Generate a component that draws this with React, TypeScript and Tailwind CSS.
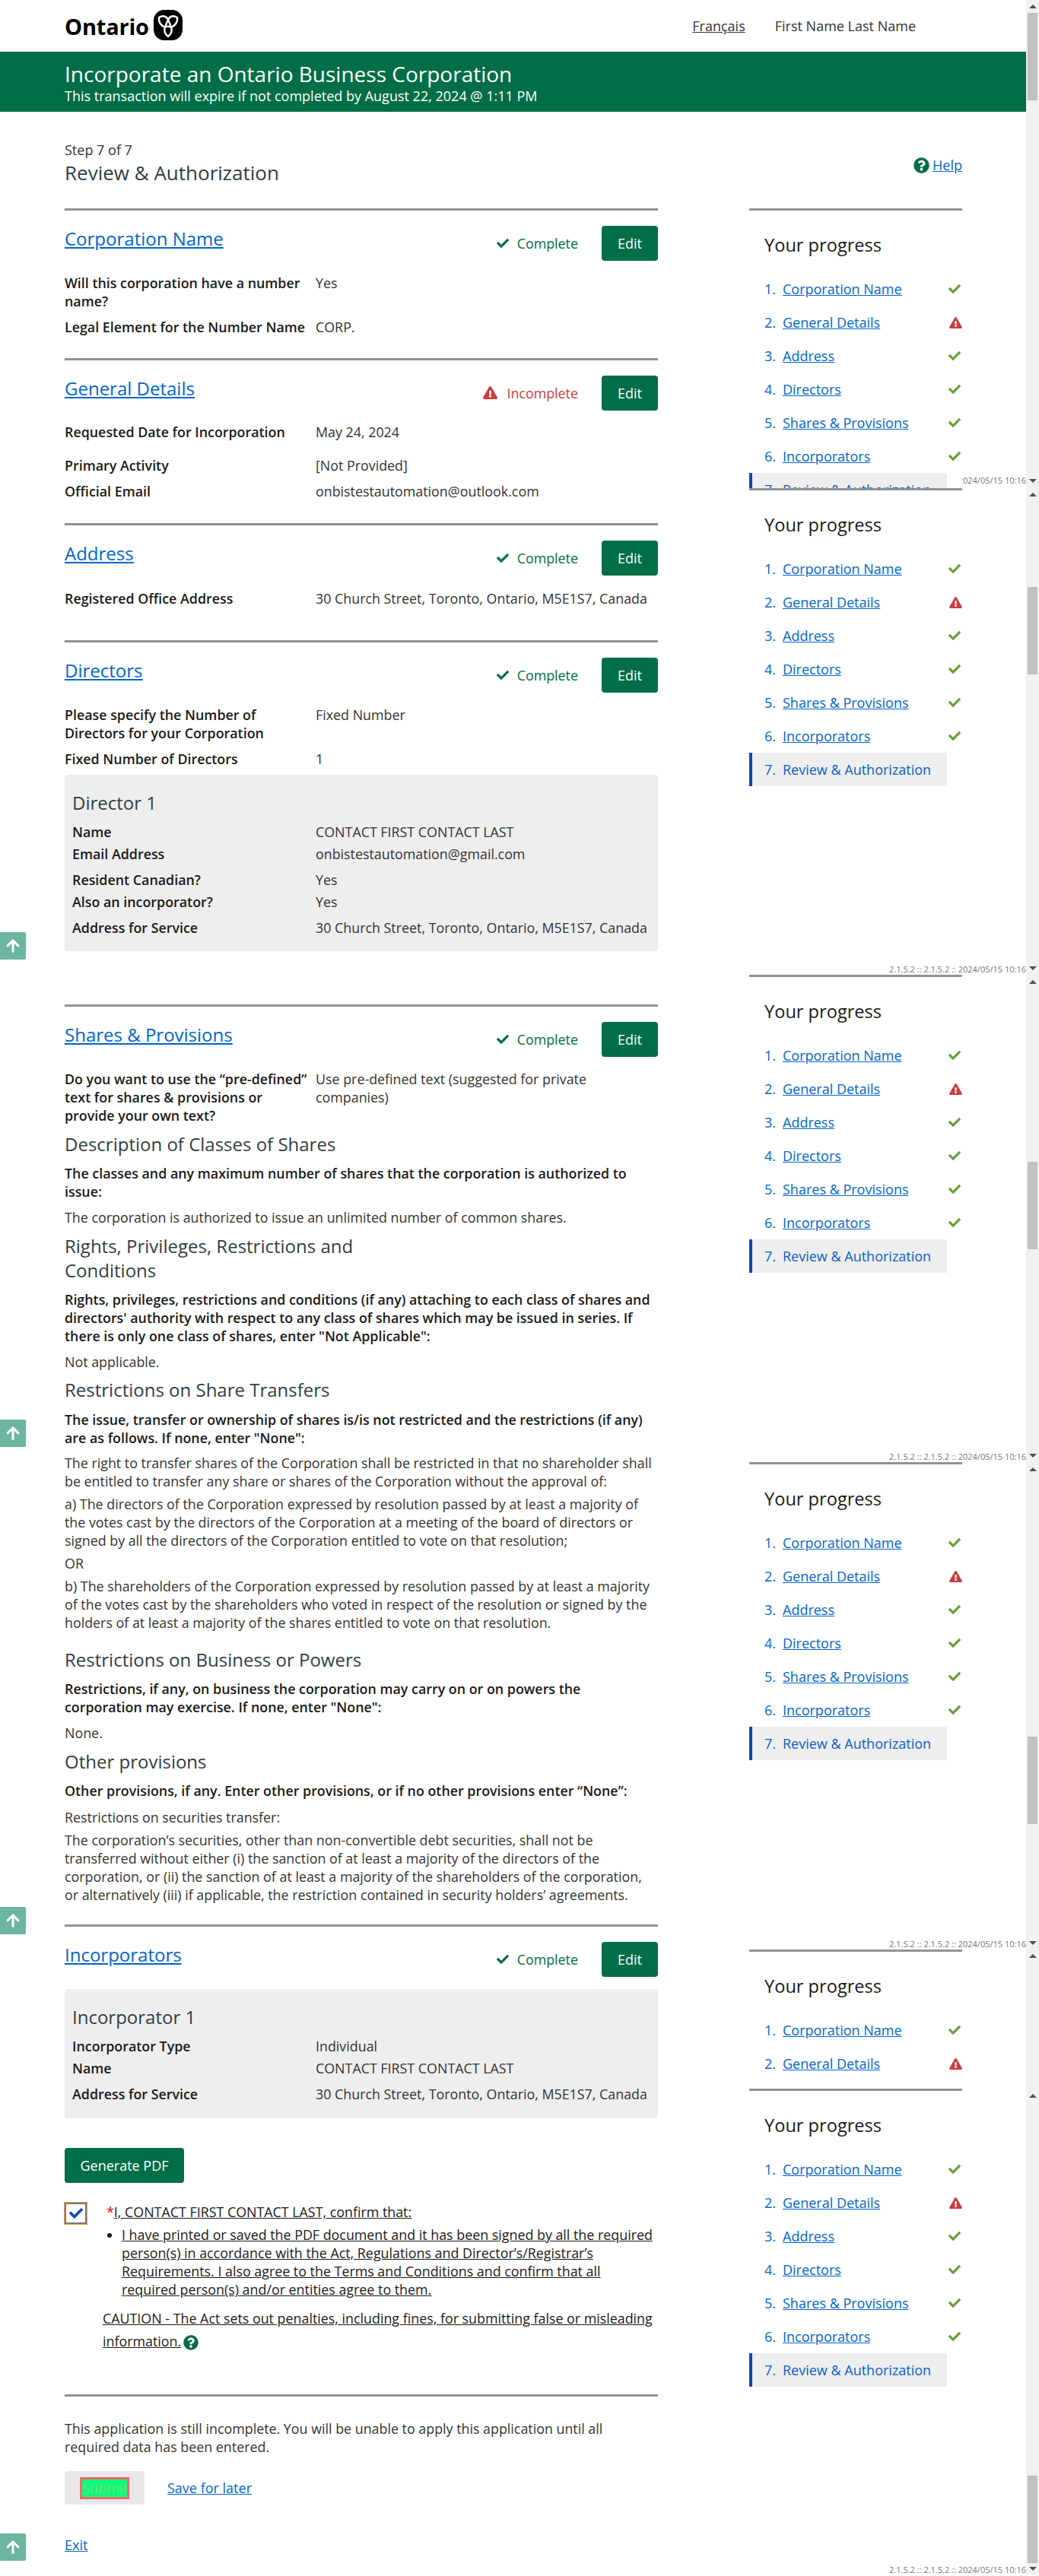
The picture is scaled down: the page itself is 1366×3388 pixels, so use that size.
import { FaArrowUp, FaCheck, FaExclamationTriangle, FaQuestionCircle } from 'react-icons/fa';

const progressItems = [
  { n: 1, label: 'Corporation Name', done: true },
  { n: 2, label: 'General Details', done: false },
  { n: 3, label: 'Address', done: true },
  { n: 4, label: 'Directors', done: true },
  { n: 5, label: 'Shares & Provisions', done: true },
  { n: 6, label: 'Incorporators', done: true },
];

const ADDRESS = '30 Church Street, Toronto, Ontario, M5E1S7, Canada';
const STAMP = '2.1.5.2 :: 2.1.5.2 :: 2024/05/15 10:16';

const OntarioLogo = () => (
  <div className="flex items-center h-[68px] pt-[1px]">
    <span className="text-[29px] leading-none font-bold text-black mr-[6px] tracking-[-0.2px]">Ontario</span>
    <svg width="38" height="40" viewBox="0 0 38 40" className="mb-[3px]">
      <rect width="38" height="40" rx="14" fill="#000" />
      <path
        d="M7 10 C12 7 17 8 19 13 C21 8 26 7 31 10 C32 16 28 21 23 23 C25 27 23 32 19 35 C15 32 13 27 15 23 C10 21 6 16 7 10 Z M19 13 C17 17 16 20 15 23 M19 13 C21 17 22 20 23 23 M15 23 C18 21 20 21 23 23"
        fill="none"
        stroke="#fff"
        strokeWidth="2.4"
      />
    </svg>
  </div>
);

const EditButton = () => (
  <button className="w-[74px] h-[46px] rounded-[4px] bg-[#026e47] text-white text-[18px]">Edit</button>
);

const SectionHead = ({ title, complete = true }: { title: string; complete?: boolean }) => (
  <div className="flex items-start justify-between pt-[20px]">
    <a className="text-[24px] leading-[34px] text-[#0066cc] underline">{title}</a>
    <div className="flex items-center h-[46px]">
      {complete ? (
        <span className="flex items-center text-[#026e47] text-[17.85px]">
          <FaCheck className="w-[16px] h-[16px] mr-[11px]" />
          Complete
        </span>
      ) : (
        <span className="flex items-center text-[#cd3c3c] text-[17.85px]">
          <FaExclamationTriangle className="w-[19px] h-[17px] mr-[12px]" />
          Incomplete
        </span>
      )}
      <div className="ml-[31px]">
        <EditButton />
      </div>
    </div>
  </div>
);

const Row = ({ label, value, className = '', labelWidth = 'w-[330px]' }: { label: string; value: string; className?: string; labelWidth?: string }) => (
  <div className={`flex text-[17.85px] leading-[24px] ${className}`}>
    <div className={`${labelWidth} shrink-0 pr-[10px] font-semibold text-[#1a1a1a]`}>{label}</div>
    <div className="text-[#333333]">{value}</div>
  </div>
);

const Hr = ({ className = '' }: { className?: string }) => <div className={`h-[3px] bg-[#929292] ${className}`} />;

const SubHead = ({ children, className = '' }: { children: React.ReactNode; className?: string }) => (
  <h4 className={`text-[24px] leading-[32px] text-[#2f3e46] ${className}`}>{children}</h4>
);

const Label = ({ children, className = 'mt-[10px]' }: { children: React.ReactNode; className?: string }) => (
  <p className={`text-[17.85px] leading-[24px] font-semibold text-[#1a1a1a] ${className}`}>{children}</p>
);

const Body = ({ children, className = 'mt-[10px]' }: { children: React.ReactNode; className?: string }) => (
  <p className={`text-[17.85px] leading-[24px] text-[#333333] ${className}`}>{children}</p>
);

const ProgressPanel = ({ className = '', active = true }: { className?: string; active?: boolean }) => (
  <div className={`overflow-hidden ${className}`}>
    <Hr />
    <h3 className="mt-[29px] pl-[20px] text-[23.6px] leading-[32px] text-[#1a1a1a]">Your progress</h3>
    <ol className="mt-[20px]">
      {progressItems.map((item) => (
        <li key={item.n} className="flex items-center h-[44px] pl-[20px] text-[18px]">
          <span className="w-[24px] text-[#0066cc]">{item.n}.</span>
          <a className="text-[#0066cc] underline flex-1">{item.label}</a>
          {item.done ? (
            <FaCheck className="w-[16px] h-[16px] text-[#689f38] mr-[2px]" />
          ) : (
            <FaExclamationTriangle className="w-[17px] h-[15px] text-[#cd3c3c]" />
          )}
        </li>
      ))}
      {active && (
        <li className="flex items-center h-[44px] w-[260px] pl-[16px] border-l-[4px] border-[#0f47a9] bg-[#eeeeee] text-[18px] text-[#0b5fcc]">
          <span className="w-[24px]">7.</span>
          Review &amp; Authorization
        </li>
      )}
    </ol>
  </div>
);

const UpArrow = ({ className }: { className: string }) => (
  <svg width="10" height="5" viewBox="0 0 10 5" className={`block mx-auto ${className}`}>
    <path d="M0 5 L5 0 L10 5 Z" fill="#505050" />
  </svg>
);

const DownArrow = ({ className }: { className: string }) => (
  <svg width="10" height="5" viewBox="0 0 10 5" className={`block mx-auto ${className}`}>
    <path d="M0 0 L10 0 L5 5 Z" fill="#505050" />
  </svg>
);

const Thumb = ({ className }: { className: string }) => (
  <div className={`mx-auto w-[13px] h-[115px] bg-[#c1c1c1] ${className}`} />
);

const BackToTop = ({ className }: { className: string }) => (
  <div className={`absolute left-0 w-[34px] h-[36px] rounded-r-[2px] bg-[#6cb5a0] flex items-center justify-center ${className}`}>
    <FaArrowUp className="w-[20px] h-[20px] text-white" />
  </div>
);

const Stamp = ({ className }: { className: string }) => (
  <div className={`absolute right-[17px] text-[11px] leading-[16px] text-[#767676] whitespace-nowrap ${className}`}>{STAMP}</div>
);

export default function App() {
  return (
    <div className="relative flex w-[1366px] bg-white" style={{ fontFamily: '"Open Sans", sans-serif' }}>
      <div className="w-[1349px]">
        <header className="flex items-center justify-between h-[68px] pl-[85px]">
          <OntarioLogo />
          <div className="flex items-center text-[18px] text-[#333333] pr-[145px]">
            <a className="underline mr-[39px]">Français</a>
            <span>First Name Last Name</span>
          </div>
        </header>
        <div className="h-[79px] bg-[#026e47] pl-[85px] pt-[13px] text-white">
          <h1 className="text-[28px] leading-[32px]">Incorporate an Ontario Business Corporation</h1>
          <p className="text-[18px] leading-[24px] mt-[1px]">This transaction will expire if not completed by August 22, 2024 @ 1:11 PM</p>
        </div>

        <div className="flex pl-[85px]">
          <main className="w-[780px]">
            <p className="mt-[38px] text-[18px] leading-[24px] text-[#333333]">Step 7 of 7</p>
            <h2 className="text-[26px] leading-[36px] text-[#2f3e46]">Review &amp; Authorization</h2>

            <Hr className="mt-[29px]" />
            <SectionHead title="Corporation Name" />
            <Row className="mt-[17px]" label="Will this corporation have a number name?" value="Yes" />
            <Row className="mt-[10px]" label="Legal Element for the Number Name" value="CORP." />

            <Hr className="mt-[29px]" />
            <SectionHead title="General Details" complete={false} />
            <Row className="mt-[16px]" label="Requested Date for Incorporation" value="May 24, 2024" />
            <Row className="mt-[20px]" label="Primary Activity" value="[Not Provided]" />
            <Row className="mt-[10px]" label="Official Email" value="onbistestautomation@outlook.com" />

            <Hr className="mt-[30px]" />
            <SectionHead title="Address" />
            <Row className="mt-[18px]" label="Registered Office Address" value={ADDRESS} />

            <Hr className="mt-[43px]" />
            <SectionHead title="Directors" />
            <Row className="mt-[17px]" label="Please specify the Number of Directors for your Corporation" value="Fixed Number" />
            <Row className="mt-[10px]" label="Fixed Number of Directors" value="1" />
            <div className="mt-[9px] bg-[#eeeeee] rounded-[4px] pl-[10px] pt-[21px] pb-[19px]">
              <SubHead>Director 1</SubHead>
              <Row className="mt-[10px]" labelWidth="w-[320px]" label="Name" value="CONTACT FIRST CONTACT LAST" />
              <Row className="mt-[5px]" labelWidth="w-[320px]" label="Email Address" value="onbistestautomation@gmail.com" />
              <Row className="mt-[10px]" labelWidth="w-[320px]" label="Resident Canadian?" value="Yes" />
              <Row className="mt-[5px]" labelWidth="w-[320px]" label="Also an incorporator?" value="Yes" />
              <Row className="mt-[10px]" labelWidth="w-[320px]" label="Address for Service" value={ADDRESS} />
            </div>

            <Hr className="mt-[70px]" />
            <SectionHead title="Shares & Provisions" />
            <Row className="mt-[17px]" label="Do you want to use the “pre-defined” text for shares & provisions or provide your own text?" value="Use pre-defined text (suggested for private companies)" />
            <SubHead className="mt-[10px]">Description of Classes of Shares</SubHead>
            <Label>The classes and any maximum number of shares that the corporation is authorized to issue:</Label>
            <Body>The corporation is authorized to issue an unlimited number of common shares.</Body>
            <SubHead className="mt-[10px] max-w-[450px]">Rights, Privileges, Restrictions and Conditions</SubHead>
            <Label>Rights, privileges, restrictions and conditions (if any) attaching to each class of shares and directors' authority with respect to any class of shares which may be issued in series. If there is only one class of shares, enter "Not Applicable":</Label>
            <Body>Not applicable.</Body>
            <SubHead className="mt-[9px]">Restrictions on Share Transfers</SubHead>
            <Label className="mt-[11px]">The issue, transfer or ownership of shares is/is not restricted and the restrictions (if any) are as follows. If none, enter "None":</Label>
            <Body className="mt-[9px]">The right to transfer shares of the Corporation shall be restricted in that no shareholder shall be entitled to transfer any share or shares of the Corporation without the approval of:</Body>
            <Body className="mt-[6px]">a) The directors of the Corporation expressed by resolution passed by at least a majority of the votes cast by the directors of the Corporation at a meeting of the board of directors or signed by all the directors of the Corporation entitled to vote on that resolution;</Body>
            <Body className="mt-[6px]">OR</Body>
            <Body className="mt-[6px]">b) The shareholders of the Corporation expressed by resolution passed by at least a majority of the votes cast by the shareholders who voted in respect of the resolution or signed by the holders of at least a majority of the shares entitled to vote on that resolution.</Body>
            <SubHead className="mt-[21px]">Restrictions on Business or Powers</SubHead>
            <Label>Restrictions, if any, on business the corporation may carry on or on powers the corporation may exercise. If none, enter "None":</Label>
            <Body>None.</Body>
            <SubHead className="mt-[10px]">Other provisions</SubHead>
            <Label>Other provisions, if any. Enter other provisions, or if no other provisions enter “None”:</Label>
            <Body className="mt-[11px]">Restrictions on securities transfer:</Body>
            <Body className="mt-[6px]">The corporation’s securities, other than non-convertible debt securities, shall not be transferred without either (i) the sanction of at least a majority of the directors of the corporation, or (ii) the sanction of at least a majority of the shareholders of the corporation, or alternatively (iii) if applicable, the restriction contained in security holders’ agreements.</Body>

            <Hr className="mt-[27px]" />
            <SectionHead title="Incorporators" />
            <div className="mt-[16px] bg-[#eeeeee] rounded-[4px] pl-[10px] pt-[21px] pb-[20px]">
              <SubHead>Incorporator 1</SubHead>
              <Row className="mt-[10px]" labelWidth="w-[320px]" label="Incorporator Type" value="Individual" />
              <Row className="mt-[5px]" labelWidth="w-[320px]" label="Name" value="CONTACT FIRST CONTACT LAST" />
              <Row className="mt-[10px]" labelWidth="w-[320px]" label="Address for Service" value={ADDRESS} />
            </div>

            <button className="mt-[39px] block w-[157px] h-[46px] rounded-[4px] bg-[#026e47] text-white text-[18px]">Generate PDF</button>

            <div className="flex mt-[25px]">
              <div className="w-[31px] h-[30px] -ml-[1px] shrink-0 border border-[#e59c4b] bg-white">
                <div className="w-full h-full border-2 border-[#7a7a7a] flex items-center justify-center">
                  <FaCheck className="w-[18px] h-[18px] text-[#0f47a9]" />
                </div>
              </div>
              <div className="ml-[20px] text-[17.85px] leading-[24px] text-[#1a1a1a]">
                <div className="pl-[5px] mt-[1px]">
                  <span className="text-[#e60000]">*</span>
                  <span className="underline">I, CONTACT FIRST CONTACT LAST, confirm that:</span>
                </div>
                <ul className="mt-[6px] pl-[25px] list-disc">
                  <li className="underline">I have printed or saved the PDF document and it has been signed by all the required person(s) in accordance with the Act, Regulations and Director’s/Registrar’s Requirements. I also agree to the Terms and Conditions and confirm that all required person(s) and/or entities agree to them.</li>
                </ul>
                <div className="mt-[11px] leading-[30px]">
                  <span className="underline">CAUTION - The Act sets out penalties, including fines, for submitting false or misleading information.</span>
                  <FaQuestionCircle className="inline-block w-[20px] h-[20px] ml-[3px] text-[#026e47] align-[-5px]" />
                </div>
              </div>
            </div>

            <Hr className="mt-[55px]" />
            <Body className="mt-[30px]">This application is still incomplete. You will be unable to apply this application until all required data has been entered.</Body>
            <div className="flex items-center mt-[20px]">
              <div className="flex items-center justify-center w-[105px] h-[44px] rounded-[4px] bg-[#e8e8e8]">
                <button className="w-[65px] h-[29px] border-[3px] border-[#f9656a] bg-[#0bfb7c] text-[#6ee26e] text-[18px] leading-none overflow-hidden">Submit</button>
              </div>
              <a className="ml-[30px] text-[18px] text-[#0066cc] underline">Save for later</a>
            </div>
            <p className="mt-[41px] pb-[28px] text-[18px] leading-[24px]">
              <a className="text-[#0066cc] underline">Exit</a>
            </p>
          </main>

          <aside className="ml-[120px] w-[280px]">
            <div className="flex items-center justify-end mt-[58px] mb-[45px] h-[24px] text-[18px]">
              <FaQuestionCircle className="w-[21px] h-[21px] text-[#026e47] mr-[4px]" />
              <a className="text-[#0066cc] underline">Help</a>
            </div>
            <ProgressPanel className="h-[368px]" />
            <ProgressPanel className="h-[640px]" />
            <ProgressPanel className="h-[641px]" />
            <ProgressPanel className="h-[641px]" />
            <ProgressPanel className="h-[183px]" />
            <ProgressPanel />
          </aside>
        </div>
      </div>

      <div className="w-[17px] bg-[#f1f1f1] relative">
        <UpArrow className="mt-[6px]" />
        <Thumb className="mt-[6px]" />
        <DownArrow className="mt-[498px]" />
        <UpArrow className="mt-[13px]" />
        <Thumb className="mt-[119px]" />
        <DownArrow className="mt-[384px]" />
        <UpArrow className="mt-[13px]" />
        <Thumb className="mt-[234px]" />
        <DownArrow className="mt-[269px]" />
        <UpArrow className="mt-[13px]" />
        <Thumb className="mt-[349px]" />
        <DownArrow className="mt-[154px]" />
        <UpArrow className="mt-[12px]" />
        <UpArrow className="mt-[179px]" />
        <Thumb className="mt-[497px]" />
        <DownArrow className="mt-[5px]" />
      </div>

      <BackToTop className="top-[1226px]" />
      <BackToTop className="top-[1867px]" />
      <BackToTop className="top-[2508px]" />
      <BackToTop className="top-[3332px]" />

      <div className="absolute top-[624px] right-[17px] w-[84px] h-[16px] overflow-hidden flex justify-end text-[11px] leading-[16px] text-[#767676] whitespace-nowrap">{STAMP}</div>
      <Stamp className="top-[1267px]" />
      <Stamp className="top-[1908px]" />
      <Stamp className="top-[2549px]" />
      <Stamp className="top-[3372px]" />
    </div>
  );
}
